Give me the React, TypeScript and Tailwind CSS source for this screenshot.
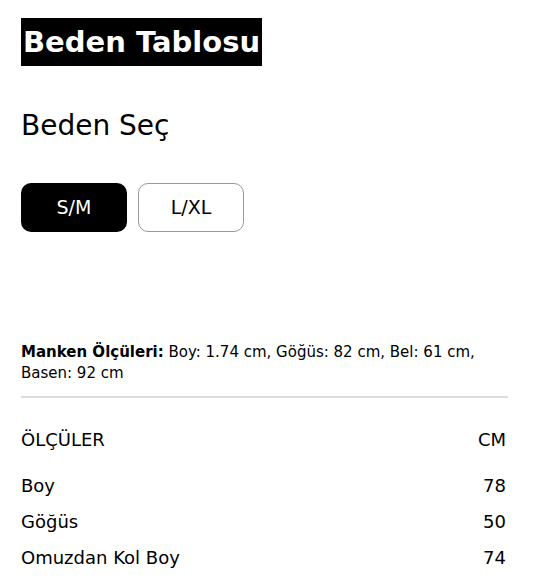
const rows = [
  { label: 'Boy', value: '78' },
  { label: 'Göğüs', value: '50' },
  { label: 'Omuzdan Kol Boy', value: '74' },
];

export default function App() {
  return (
    <div className="min-h-screen bg-white px-[21px] pt-[18px] text-black" style={{ fontFamily: '"DejaVu Sans", sans-serif' }}>
      <h1 className="inline-block bg-black px-[2px] text-[29px] leading-[48px] font-bold text-white">Beden Tablosu</h1>

      <h2 className="mt-[40px] text-[28px] leading-[40px] font-normal">Beden Seç</h2>

      <div className="mt-[37px] flex gap-[11px]">
        <button className="h-[49px] w-[106px] rounded-[10px] bg-black text-[19px] text-white">S/M</button>
        <button className="h-[49px] w-[106px] rounded-[10px] border border-[#999] bg-white text-[19px] text-black">L/XL</button>
      </div>

      <div className="mt-[110px] w-[487px]">
        <p className="text-[15px] leading-[21px]">
          <span className="font-bold">Manken Ölçüleri:</span>
          {' Boy: 1.74 cm, Göğüs: 82 cm, Bel: 61 cm, Basen: 92 cm'}
        </p>
        <div className="mt-[12px] h-[2px] bg-[#dcdcdc]" />

        <div className="mt-[30px] flex justify-between pr-[2px] text-[18px] leading-[24px]">
          <span>ÖLÇÜLER</span>
          <span>CM</span>
        </div>

        <div className="mt-[22px] flex flex-col gap-[12px]">
          {rows.map((r) => (
            <div key={r.label} className="flex justify-between pr-[2px] text-[18px] leading-[24px]">
              <span>{r.label}</span>
              <span>{r.value}</span>
            </div>
          ))}
        </div>
      </div>
    </div>
  );
}
